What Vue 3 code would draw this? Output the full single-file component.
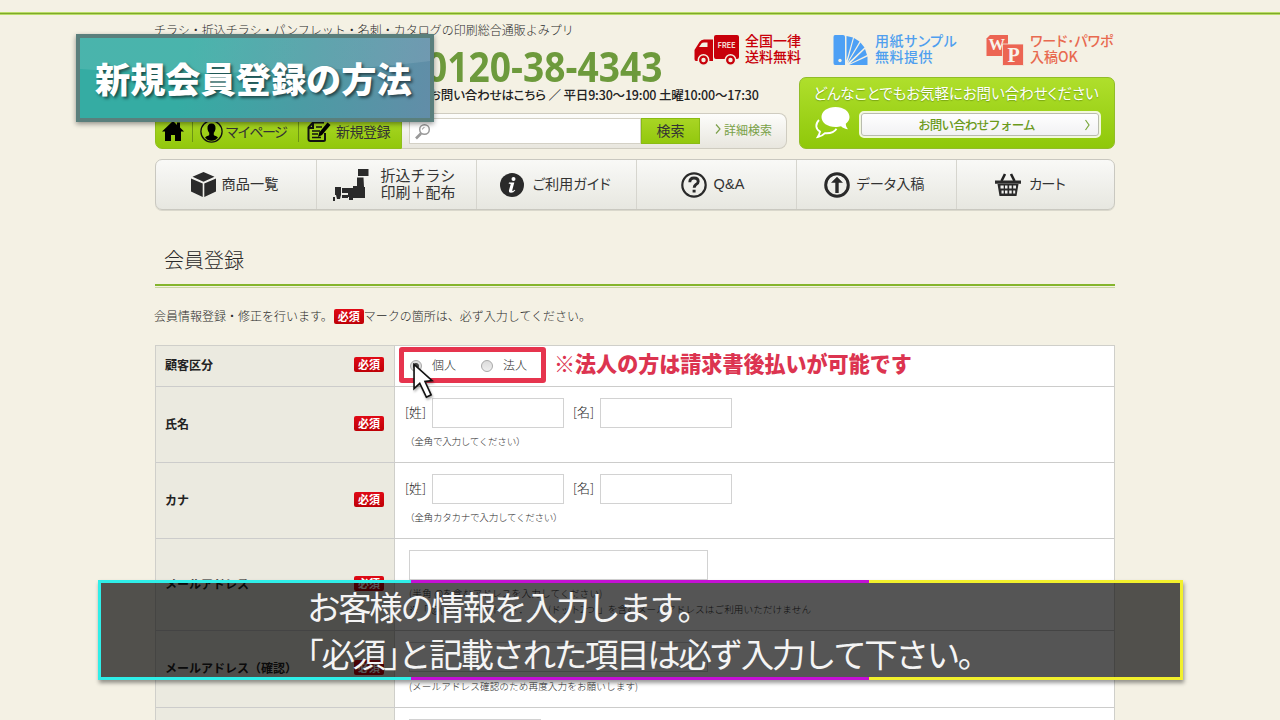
<script setup>
import { ref } from 'vue'

const tipo = ref('個人')
const tipos = ['個人', '法人']

const menu = [
    { id: 'box', lineas: ['商品一覧'] },
    { id: 'map', lineas: ['折込チラシ', '印刷＋配布'] },
    { id: 'info', lineas: ['ご利用ガイド'] },
    { id: 'qa', lineas: ['Q&A'] },
    { id: 'data', lineas: ['データ入稿'] },
    { id: 'cart', lineas: ['カート'] }
]

const nombres = [
    { titulo: '氏名', nota: '（全角で入力してください）' },
    { titulo: 'カナ', nota: '（全角カタカナで入力してください）' }
]
</script>

<template>
    <div class="page">
        <div class="top-line"></div>
        <div class="wrap">
            <header class="header">
                <div class="head-left">
                    <p class="tagline">チラシ・折込チラシ・パンフレット・名刺・カタログの印刷総合通販よみプリ</p>
                    <p class="phone"><span>0120-38-4343</span></p>
                    <p class="hours">お問い合わせはこちら ／ 平日9:30〜19:00 土曜10:00〜17:30</p>
                    <div class="toolbar">
                        <div class="user-menu">
                            <a class="home">
                                <svg width="22" height="20" viewBox="0 0 22 20"><path d="M11 0L0 10.500h3V20h6v-6h4v6h6v-9.500h3L18 6.500V1.500h-3V4z" /></svg>
                            </a>
                            <a class="mypage">
                                <svg width="23" height="23" viewBox="0 0 23 23"><circle cx="11.500" cy="11.500" r="10.600" fill="none" stroke="#111" stroke-width="1.300" /><path d="M11.500 3.500c-3 0-4.300 2-4 5 0 2 1 3.300 1.700 4.300v2.200c-1 1-3.200 1.200-4.200 2.400 1.500 2 3.700 3.300 6.500 3.300s5-1.300 6.500-3.300c-1-1.200-3.200-1.400-4.200-2.400v-2.200c.7-1 1.700-2.300 1.700-4.300.3-3-1-5-4-5z" /></svg>
                                <span>マイページ</span>
                            </a>
                            <a class="signup">
                                <svg width="24" height="22" viewBox="0 0 24 22"><path d="M6 2.500h11M18 13v6.500q0 1.500-1.500 1.500h-13Q1.500 21 1.500 19V7.500L6 2.500V8H2" fill="none" stroke="#111" stroke-width="2" /><path d="M5 11h8M5 14h6M5 17.500h9M9 7h6" stroke="#111" stroke-width="1.600" /><path d="M20.500 2.500l3 2.500-8.500 10-4 2 1.200-4.500z" /></svg>
                                <span>新規登録</span>
                            </a>
                        </div>
                        <div class="search">
                            <div class="search-field">
                                <svg width="18" height="18" viewBox="0 0 18 18" fill="none" stroke="#999"><circle cx="10.500" cy="6.500" r="4.800" stroke-width="1.500" /><path d="M7 10.500L2 15.500" stroke-width="2.600" /><path d="M8.500 6.500a2 2 0 0 1 2-2" stroke-width="1" /></svg>
                            </div>
                            <button class="search-btn">検索</button>
                            <a class="detail"><svg width="6" height="10" viewBox="0 0 6 10"><path d="M1 .5L5 5 1 9.500" fill="none" stroke="#7da04a" stroke-width="1.200" /></svg>詳細検索</a>
                        </div>
                    </div>
                </div>
                <div class="head-right">
                    <div class="promos">
                        <div class="promo red">
                            <svg width="46" height="32" viewBox="0 0 46 32"><path d="M22 1h21q2 0 2 2v20q0 2-2 2H22q-2 0-2-2V3q0-2 2-2zM10 5.500h9V27H2q-1.500 0-1.500-2V16l5-8q1.500-2.500 4.500-2.500z" fill="#c8000a" /><path d="M10 8.500h3.500V13H5l2.500-3.500q.8-1 2.500-1z" fill="#f3f0e3" /><g fill="#c8000a" stroke="#f3f0e3" stroke-width="1.500"><circle cx="9.500" cy="26" r="5.200" /><circle cx="36.500" cy="26" r="5.200" /></g><circle cx="9.500" cy="26" r="2.200" fill="#f3f0e3" /><circle cx="36.500" cy="26" r="2.200" fill="#f3f0e3" /><text x="23.500" y="14" textLength="18" font-size="7.500" font-weight="700" fill="#f3d9cf">FREE</text></svg>
                            <span>全国一律<br>送料無料</span>
                        </div>
                        <div class="promo blue">
                            <svg width="35" height="32" viewBox="0 0 35 32"><g fill="#4da0f5"><path d="M2 1h8q2 0 2 2v28H2q-1.500 0-1.500-2V3Q.5 1 2 1z" /><path d="M13.500 2l6.500 1.500-6.500 23zM21 4l5.500 3.500-12 20.500zM27.500 8.500l4 5L15 29zM32 15l2 6-17 8.500zM34.500 22.500V31H16z" /></g><circle cx="7" cy="26.500" r="1.700" fill="#f3f0e3" /></svg>
                            <span>用紙サンプル<br>無料提供</span>
                        </div>
                        <div class="promo coral">
                            <svg width="38" height="32" viewBox="0 0 38 32"><path d="M4 1h18v21H.5V4.500z" fill="#ec6553" /><path d="M16.500 10H37.500v21.500h-21z" fill="#ec6553" stroke="#f3f0e3" stroke-width=".8" /><g class="wp" fill="#f8f4ec"><text x="2.500" y="16" font-size="16" textLength="16.500" lengthAdjust="spacingAndGlyphs">W</text><text x="21.500" y="27.500" font-size="20">P</text></g></svg>
                            <span>ワード･パワポ<br>入稿OK</span>
                        </div>
                    </div>
                    <div class="contact">
                        <p>どんなことでもお気軽にお問い合わせください</p>
                        <div class="contact-row">
                            <svg width="36" height="34" viewBox="0 0 36 34"><path d="M4 14c-4 4-3.500 9 1 11.500-.3 2-1 3.500-2.300 5.500 3-.5 5.500-1.800 7.300-3.800 4.500.3 9.500-1.200 11.500-4.500" fill="none" stroke="#fff" stroke-width="1.800" /><path d="M20.500 1C12.500 1 6.500 5.200 6.500 11s6 10 14 10c2 0 4-.3 5.500-.8 2 1.800 4.500 2.800 7 3-1.300-1.500-2.200-3.500-2.200-5.500 2.300-1.700 3.700-4 3.700-6.700C34.500 5.200 28.500 1 20.500 1z" fill="#fff" /></svg>
                            <a class="contact-btn"><span>お問い合わせフォーム</span><svg width="7" height="12" viewBox="0 0 7 12"><path d="M1.500 1L5 6l-3.500 5" fill="none" stroke="#7aa83c" stroke-width="1.200" /></svg></a>
                        </div>
                    </div>
                </div>
            </header>

            <nav class="nav">
                <a v-for="item in menu" :key="item.id" :class="item.id">
                    <svg v-if="item.id === 'box'" width="25" height="25" viewBox="0 0 25 25"><path d="M12.500 0l11 4.800-11 5-11-5zM0 6.500l11.700 5V25L0 19.500zM25 6.500l-11.700 5V25L25 19.500z" /></svg>
                    <svg v-else-if="item.id === 'map'" width="36" height="32" viewBox="0 0 36 32"><path d="M25 0h10.500v7H25zM24 8.500h6.500L31 18h1v11H20v2h-4v-3h-1v-9h5v-2h4zM2 18h6v8l-1 4H4l-1-4H2zM9 19h6v5H9zM9 26h6v3H9zM0 28h2v4H0z" /></svg>
                    <svg v-else-if="item.id === 'info'" width="24" height="24" viewBox="0 0 24 24"><circle cx="12" cy="12" r="12" /><g fill="#fff"><circle cx="13.500" cy="6" r="2" /><path d="M9 9.500h5.300l-2 7.500q-.2 1 .6.900.8-.1 1.700-1.200l.7.600q-1.800 2.500-4.300 2.500-2.500 0-2-2.500l1.600-5.700q.2-.9-.7-.9H8.700z" /></g></svg>
                    <svg v-else-if="item.id === 'qa'" width="26" height="26" viewBox="0 0 26 26"><circle cx="13" cy="13" r="11.700" fill="none" stroke="#2a2a2a" stroke-width="2.200" /><path d="M8.800 10.200q0-4.200 4.200-4.200t4.200 3.500q0 1.800-2.200 3-1.800 1.200-1.800 3.300" fill="none" stroke="#2a2a2a" stroke-width="2.900" /><path d="M11.600 17.800h3v2.800h-3z" /></svg>
                    <svg v-else-if="item.id === 'data'" width="26" height="26" viewBox="0 0 26 26"><circle cx="13" cy="13" r="11.300" fill="none" stroke="#2a2a2a" stroke-width="3" /><path d="M13 4.800l6 6h-4.300V21h-3.400V10.800H7z" /></svg>
                    <svg v-else width="26" height="24" viewBox="0 0 26 24"><path d="M6.500 8l3.500-7M19.500 8L16 1" stroke="#222" stroke-width="2.600" /><path d="M0 7.500h26v3.200H0zM2.500 11h21L21.500 23h-17z" /><path d="M5.500 12.500h3.200v3h-3.200zM10 12.500h2.500v3H10zM14.200 12.500h2.500v3h-2.500zM18.200 12.500h2.800v3h-2.800zM6.500 17.500h2.200v3H6.500zM10 17.500h2.500v3H10zM14.200 17.500h2.500v3h-2.500zM18.200 17.500h2v3h-2z" fill="#f0f0ee" /></svg>
                    <span><template v-for="(linea, i) in item.lineas" :key="linea"><br v-if="i">{{ linea }}</template></span>
                </a>
            </nav>

            <h1>会員登録</h1>
            <p class="lead">会員情報登録・修正を行います。<b class="must">必須</b>マークの箇所は、必ず入力してください。</p>

            <div class="form">
                <div class="row r-type">
                    <div class="th">顧客区分<b class="must">必須</b></div>
                    <div class="td types">
                        <div class="frame">
                            <label v-for="t in tipos" :key="t" @click="tipo = t"><i class="radio" :class="{ on: tipo === t }"></i>{{ t }}</label>
                            <svg class="cursor" width="25" height="38" viewBox="0 0 26 40"><path d="M2 1.500L2 27l6-5.500 7 14.500 5-2.500-6.500-14 7.500-1z" fill="#fff" stroke="#111" stroke-width="1.700" /></svg>
                        </div>
                        <strong>※法人の方は請求書後払いが可能です</strong>
                    </div>
                </div>
                <div v-for="n in nombres" :key="n.titulo" class="row r-name">
                    <div class="th">{{ n.titulo }}<b class="must">必須</b></div>
                    <div class="td">
                        <div class="pair">
                            <span>[姓]</span><input type="text"><span class="second">[名]</span><input type="text">
                        </div>
                        <p class="note">{{ n.nota }}</p>
                    </div>
                </div>
                <div class="row r-mail">
                    <div class="th">メールアドレス<b class="must">必須</b></div>
                    <div class="td inset">
                        <input type="text" class="wide">
                        <p class="note">(半角 @を含むアドレスを入力してください)</p>
                        <p class="note">※「.@(ドットアット)」「．　．　(ドット2つ)」を含むメールアドレスはご利用いただけません</p>
                    </div>
                </div>
                <div class="row r-confirm">
                    <div class="th">メールアドレス（確認）<b class="must">必須</b></div>
                    <div class="td inset">
                        <input type="text" class="wide">
                        <p class="note">(メールアドレス確認のため再度入力をお願いします)</p>
                    </div>
                </div>
                <div class="row r-last">
                    <div class="th"></div>
                    <div class="td inset"><input type="text"></div>
                </div>
            </div>
        </div>

        <div class="title-plate">新規会員登録の方法</div>
        <div class="caption">
            <p>お客様の情報を入力します。</p>
            <p>「必須」と記載された項目は必ず入力して下さい。</p>
        </div>
    </div>
</template>

<style>
body {
    margin: 0;
    background: #f4f1e4;
}
</style>

<style scoped>
.page {
    position: relative;
    display: flow-root;
    width: 1280px;
    height: 720px;
    overflow: hidden;
    background: #f4f1e4;
    color: #2a2a2a;
    font-family: "Noto Sans CJK JP", "Liberation Sans", sans-serif;
    font-size: 12px;
}

p, h1 {
    margin: 0;
}

svg {
    flex: none;
    display: block;
}

.top-line {
    height: 1px;
    margin-top: 12px;
    border-top: 1px solid #b9dd66;
    border-bottom: 1px solid #b9dd66;
    background: #7fa82c;
}

.wrap {
    width: 960px;
    margin-left: 155px;
}

.header {
    display: flex;
    height: 134px;
}

.head-left {
    flex: none;
    width: 539px;
}

.tagline {
    height: 18px;
    margin-left: -1px;
    padding-top: 6px;
    line-height: 18px;
    font-weight: 300;
    white-space: nowrap;
}

.phone {
    height: 47px;
    padding-left: 271px;
    font-family: "Open Sans", sans-serif;
    font-size: 42px;
    line-height: 53px;
    font-weight: 700;
    color: #6d9a3c;
}

.phone span {
    display: inline-block;
    transform: scaleX(.885);
    transform-origin: left;
}

.hours {
    height: 18px;
    padding: 0 0 9px 274px;
    line-height: 17px;
    color: #222;
    font-size: 12.500px;
    font-weight: 500;
    letter-spacing: -.17px;
    font-feature-settings: "palt";
    white-space: nowrap;
}

.toolbar {
    display: flex;
    width: 632px;
    height: 36px;
}

.user-menu {
    display: flex;
    align-items: center;
    box-sizing: border-box;
    width: 247px;
    height: 36px;
    background: linear-gradient(#acd928, #92c80c);
    border: 1px solid #8fbf1c;
    border-radius: 7px 0 0 7px;
    color: #333;
    font-size: 14px;
}

.user-menu a {
    display: flex;
    align-items: center;
    height: 22px;
}

.home {
    padding: 0 8px 0 6px;
}

.mypage {
    gap: 2px;
    width: 98px;
    padding-left: 7px;
    border-left: 1px solid #6c9414;
}

.mypage span {
    letter-spacing: -1.700px;
}

.signup {
    gap: 5px;
    padding-left: 8px;
    border-left: 1px solid #6c9414;
}

.signup span {
    letter-spacing: -.5px;
}

.search {
    display: flex;
    box-sizing: border-box;
    width: 385px;
    height: 36px;
    padding: 4px 0 0 7px;
    background: linear-gradient(#fdfdfb, #e8e6de);
    border: 1px solid #cfccc0;
    border-left: 0;
    border-radius: 0 8px 8px 0;
}

.search-field {
    box-sizing: border-box;
    width: 232px;
    height: 26px;
    padding: 4px;
    background: #fff;
    border: 1px solid #d4d1c6;
}

.search-btn {
    width: 59px;
    height: 26px;
    padding: 0 0 2px;
    border: 1px solid #8abb14;
    background: linear-gradient(#a8d524, #93c80e);
    font: 400 14px "Noto Sans CJK JP", sans-serif;
    color: #333;
}

.detail {
    display: flex;
    align-items: center;
    gap: 3px;
    height: 22px;
    padding-left: 15px;
    color: #78a046;
}

.head-right {
    flex: none;
    width: 421px;
}

.promos {
    display: flex;
    height: 33px;
    padding-top: 18px;
    font-size: 14px;
    font-weight: 500;
    line-height: 16px;
}

.promo {
    display: flex;
    align-items: center;
    white-space: nowrap;
}

.promo span {
    padding-bottom: 4px;
    font-feature-settings: "palt";
}

.red {
    width: 139px;
    gap: 5px;
    color: #c8000a;
}

.blue {
    width: 153px;
    gap: 7px;
    color: #4f9fef;
    letter-spacing: .5px;
}

.coral {
    gap: 6px;
    color: #e86a50;
}

.wp {
    font-family: "Liberation Serif", serif;
    font-weight: 700;
}

.contact {
    box-sizing: border-box;
    width: 316px;
    height: 72px;
    margin: 11px 0 0 105px;
    padding-top: 5px;
    background: linear-gradient(#afdf2c, #8fc80a);
    border: 1px solid #91bd28;
    border-radius: 7px;
    color: #fff;
}

.contact p {
    height: 23px;
    padding-right: 2px;
    line-height: 20px;
    text-align: center;
    font-size: 14.500px;
    letter-spacing: -.07px;
    font-feature-settings: "palt";
    text-shadow: 0 1px 1px #7aa514;
    white-space: nowrap;
}

.contact-row {
    display: flex;
    gap: 8px;
    padding-left: 15px;
}

.contact-btn {
    display: flex;
    align-items: center;
    box-sizing: border-box;
    width: 242px;
    height: 27px;
    margin-top: 5px;
    padding: 0 8px 0 8px;
    background: linear-gradient(#fff, #f1f1f3);
    border: 2px solid #f2f8dc;
    border-radius: 5px;
    box-shadow: inset 0 0 0 1px #b9bcae;
    color: #6b9a1c;
    font-size: 12.500px;
    font-weight: 500;
    letter-spacing: -.8px;
}

.contact-btn span {
    flex: 1;
    padding-bottom: 1px;
    text-align: center;
}

.nav {
    display: flex;
    box-sizing: border-box;
    width: 960px;
    height: 51px;
    margin-top: 10px;
    background: linear-gradient(#f9f9f7, #e7e7e0);
    border: 1px solid #c9c8c0;
    border-radius: 7px;
    box-shadow: 0 1px 0 #dad8cc;
    overflow: hidden;
}

.nav a {
    display: flex;
    flex: none;
    align-items: center;
    justify-content: center;
    gap: 6px;
    box-sizing: border-box;
    width: 160px;
    border-left: 1px solid #d6d5ce;
    fill: #2a2a2a;
    color: #333;
    font-size: 14.200px;
    line-height: 17px;
    white-space: nowrap;
}

.nav a:first-child {
    padding-right: 3px;
    border-left: 0;
}

.nav span {
    padding-bottom: 2px;
}

.nav .map {
    gap: 11px;
    padding-right: 4px;
    font-size: 15px;
}

.nav .map span {
    padding-bottom: 4px;
}

.nav .info {
    gap: 8px;
    padding-right: 2px;
}

.nav .qa {
    gap: 7px;
    padding-right: 8px;
    font-family: "Liberation Sans", sans-serif;
    font-size: 14.500px;
}

.nav .qa span {
    padding-bottom: 0;
    letter-spacing: .1px;
}

.nav .data {
    padding-right: 4px;
}

.nav .cart {
    gap: 8px;
    width: 158px;
    padding-right: 11px;
    letter-spacing: -.7px;
}

.nav .info span, .nav .data span, .nav .cart span {
    font-feature-settings: "palt";
}

h1 {
    height: 38px;
    margin-top: 36px;
    padding-left: 9px;
    border-bottom: 2px solid #84b52c;
    box-shadow: 0 1px #f4f1e4, 0 2px #c9d6a4;
    font-size: 20px;
    font-weight: 300;
    line-height: 27px;
}

.lead {
    height: 59px;
    margin-left: -1px;
    line-height: 60px;
    white-space: nowrap;
    font-weight: 300;
}

.must {
    display: inline-block;
    width: 30px;
    height: 15px;
    border-radius: 2px;
    background: linear-gradient(#e00a16, #be0006);
    color: #fff;
    font-size: 11px;
    font-weight: 700;
    line-height: 15px;
    text-align: center;
}

.lead .must {
    margin-left: 1px;
}

.form {
    box-sizing: border-box;
    width: 960px;
    border: 1px solid #cfcfca;
    background: #fff;
}

.row {
    display: flex;
    box-sizing: border-box;
    border-bottom: 1px solid #cccccb;
}

.th {
    display: flex;
    align-items: center;
    justify-content: space-between;
    box-sizing: border-box;
    width: 239px;
    padding: 0 10px 3px 9px;
    background: #ebeae0;
    border-right: 1px solid #cfcfca;
    color: #222;
    font-weight: 700;
}

.td {
    flex: 1;
    padding-left: 10px;
    font-weight: 300;
}

.r-type {
    height: 41px;
}

.r-name {
    height: 76px;
}

.r-mail {
    height: 92px;
}

.r-confirm {
    height: 77px;
}

.r-last {
    height: 80px;
}

.types {
    display: flex;
    align-items: flex-start;
    gap: 8px;
    padding: 1px 0 0 4px;
}

.frame {
    position: relative;
    display: flex;
    align-items: center;
    gap: 25px;
    box-sizing: border-box;
    width: 147px;
    height: 36px;
    padding: 0 0 2px 6px;
    border: 5px solid #e6344e;
    border-radius: 3px;
}

.frame label {
    display: flex;
    align-items: center;
    gap: 10px;
}

.radio {
    box-sizing: border-box;
    width: 12px;
    height: 12px;
    margin-top: 3px;
    border: 1px solid #a8a8a8;
    border-radius: 50%;
    background: linear-gradient(#dcdcdc, #eee);
}

.radio.on {
    background: radial-gradient(#444 2.500px, #ddd 3.500px);
}

.cursor {
    position: absolute;
    left: 8px;
    top: 11px;
    filter: drop-shadow(1px 2px 1px rgba(0, 0, 0, .3));
}

.types strong {
    color: #dc3450;
    font-size: 21.050px;
    font-weight: 900;
    line-height: 33px;
    white-space: nowrap;
}

.pair {
    display: flex;
    align-items: center;
    height: 30px;
    margin-top: 11px;
    font-size: 13px;
}

.pair span {
    width: 27px;
    padding-bottom: 4px;
}

.pair .second {
    margin-left: 9px;
}

input {
    box-sizing: border-box;
    width: 132px;
    height: 30px;
    border: 1px solid #d2d2d2;
    background: #fff;
}

.wide {
    display: block;
    width: 299px;
}

.inset {
    padding: 11px 0 0 14px;
}

.note {
    font-size: 9.600px;
    line-height: 16px;
    letter-spacing: .1px;
    white-space: nowrap;
}

.pair + .note {
    padding-top: 5px;
    letter-spacing: -.3px;
}

.r-mail .note:nth-of-type(1) {
    padding-top: 5px;
    letter-spacing: .2px;
}

.r-confirm .note {
    padding-top: 6px;
}

.title-plate {
    position: absolute;
    left: 76px;
    top: 34px;
    box-sizing: border-box;
    width: 358px;
    height: 88px;
    border: 4px solid #5a7f7c;
    padding-left: 15px;
    background: radial-gradient(ellipse 300px 36px at 130px -1px, rgba(255, 255, 255, .1) 98%, transparent), linear-gradient(100deg, #35aca3 30%, #4c9ba4 65%, #628da8);
    box-shadow: 0 2px 5px rgba(0, 0, 0, .4);
    color: #fff;
    font-size: 35.200px;
    font-weight: 900;
    line-height: 80px;
    text-shadow: 2px 2px 3px rgba(0, 0, 0, .55);
    white-space: nowrap;
}

.caption {
    position: absolute;
    left: 98px;
    top: 580px;
    box-sizing: border-box;
    width: 1085px;
    height: 100px;
    border: 3px solid;
    border-image: linear-gradient(90deg, #2feee8 313px, #c410d4 313px, #c410d4 771px, #f2f02c 771px) 3;
    padding-left: 206px;
    background: rgba(0, 0, 0, .667);
    box-shadow: 1px 3px 4px rgba(0, 0, 0, .4);
    color: #f4f4f4;
    font-size: 33.500px;
    line-height: 45px;
    letter-spacing: -2.350px;
    font-feature-settings: "halt";
    white-space: nowrap;
}

.caption p + p {
    margin-top: 2px;
}
</style>
